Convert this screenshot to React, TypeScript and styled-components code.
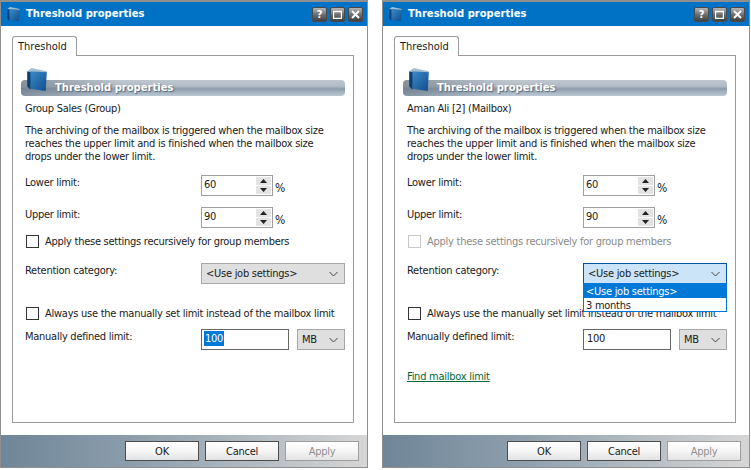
import styled, { createGlobalStyle } from 'styled-components';

const GlobalStyle = createGlobalStyle`
  html, body {
    margin: 0;
    padding: 0;
    background: #ffffff;
  }
  body {
    font-family: "DejaVu Sans Condensed", "DejaVu Sans", sans-serif;
    font-size: 11px;
    letter-spacing: -0.26px;
    color: #1a1a1a;
  }
`;

const Page = styled.div`
  width: 751px;
  height: 470px;
  display: flex;
  gap: 14px;
  overflow: hidden;
`;

const Dialog = styled.div`
  width: 368px;
  height: 468px;
  box-sizing: border-box;
  border: 1px solid #8f8f8f;
  border-top-width: 2px;
  display: flex;
  flex-direction: column;
  background: #fff;
`;

const TitleBar = styled.div`
  height: 24px;
  flex: none;
  background: #0072c6;
  display: flex;
  align-items: center;
  padding: 0 4px 0 5px;
`;

const TitleText = styled.span`
  margin: -2px 0 0 5px;
  flex: 1;
  color: #fff;
  font-family: "DejaVu Sans", sans-serif;
  font-weight: 700;
  font-size: 10px;
  letter-spacing: 0;
`;

const WinButton = styled.div`
  width: 15px;
  height: 15px;
  margin-left: 3px;
  border-radius: 2px;
  border: 1px solid #4a4a4a;
  box-sizing: border-box;
  background: linear-gradient(#b4b4b4, #6a6a6a 55%, #3f3f3f);
  color: #fff;
  font-size: 11px;
  font-weight: 700;
  display: flex;
  align-items: center;
  justify-content: center;
`;

const Body = styled.div`
  flex: 1;
  padding: 10px 13px 12px 11px;
  display: flex;
  flex-direction: column;
`;

const Tab = styled.div`
  align-self: flex-start;
  width: 65px;
  height: 20px;
  box-sizing: border-box;
  border: 1px solid #9a9a9a;
  border-bottom: none;
  border-radius: 3px 3px 0 0;
  background: #fff;
  padding: 3px 0 0 5px;
  margin-bottom: -1px;
  letter-spacing: 0;
  position: relative;
  z-index: 1;
`;

const Pane = styled.div`
  flex: 1;
  border: 1px solid #9a9a9a;
  padding: 24px 8px 0 8px;
  display: flex;
  flex-direction: column;
`;

const Banner = styled.div`
  position: relative;
  height: 16px;
  border-radius: 4px;
  background:
    linear-gradient(90deg, rgba(100, 114, 128, 0.6), rgba(110, 124, 138, 0) 30%),
    linear-gradient(#bfc7cf 0%, #b0bac4 40%, #8d9cac 55%, #9dacbb 70%, #bcc8d4 100%);
  padding-left: 34px;
  color: #fff;
  font-family: "DejaVu Sans", sans-serif;
  font-weight: 700;
  font-size: 10px;
  letter-spacing: 0;
  line-height: 15px;
  text-shadow: 1px 1px 1px #5c6a78;
`;

const BannerIcon = styled.div`
  position: absolute;
  left: 4px;
  top: -12px;
`;

const Content = styled.div`
  padding: 0 0 0 4px;
  display: flex;
  flex-direction: column;
`;

const OwnerName = styled.div`
  margin-top: 5px;
  line-height: 15px;
`;

const Description = styled.div`
  margin-top: 8px;
  line-height: 13px;
  white-space: nowrap;
`;

const FieldRow = styled.div<{ $top: number }>`
  display: flex;
  align-items: flex-start;
  margin-top: ${(p) => p.$top}px;
  position: relative;
`;

const Label = styled.div`
  width: 176px;
  flex: none;
  line-height: 15px;
`;

const SpinBox = styled.div`
  width: 72px;
  height: 21px;
  box-sizing: border-box;
  border: 1px solid #a0a0a0;
  background: #fff;
  display: flex;
  align-items: center;
  padding: 0 1px 0 2px;
`;

const SpinValue = styled.span`
  flex: 1;
  margin-top: -2px;
`;

const SpinButtons = styled.div`
  width: 15px;
  display: flex;
  flex-direction: column;
  gap: 1px;
`;

const SpinArrow = styled.div`
  height: 8px;
  background: #e3e3e3;
  display: flex;
  align-items: center;
  justify-content: center;
`;

const Unit = styled.span`
  margin: 6px 0 0 2px;
  line-height: 15px;
  font-size: 12px;
`;

const CheckRow = styled.div<{ $top: number; $disabled?: boolean }>`
  display: flex;
  align-items: center;
  height: 15px;
  white-space: nowrap;
  margin-top: ${(p) => p.$top}px;
  color: ${(p) => (p.$disabled ? '#8a8a8a' : 'inherit')};
`;

const CheckBox = styled.div<{ $disabled?: boolean }>`
  width: 13px;
  height: 13px;
  box-sizing: border-box;
  border: 1px solid ${(p) => (p.$disabled ? '#c8c8c8' : '#333333')};
  background: #fff;
  margin: 0 6px 0 1px;
  flex: none;
`;

const Combo = styled.div<{ $width: number; $open?: boolean }>`
  width: ${(p) => p.$width}px;
  height: 21px;
  box-sizing: border-box;
  border: 1px solid ${(p) => (p.$open ? '#005499' : '#a8a8a8')};
  background: ${(p) => (p.$open ? '#cce4f7' : '#dfdfdf')};
  display: flex;
  align-items: center;
  justify-content: space-between;
  padding: 0 6px 0 4px;
  flex: none;
`;

const DropList = styled.div`
  position: absolute;
  left: 176px;
  top: 20px;
  width: 144px;
  box-sizing: border-box;
  border: 1px solid #0078d7;
  background: #fff;
  z-index: 2;
`;

const DropItem = styled.div<{ $active?: boolean }>`
  height: ${(p) => (p.$active ? 14 : 13)}px;
  line-height: 15px;
  padding-left: 2px;
  background: ${(p) => (p.$active ? '#0078d7' : 'transparent')};
  color: ${(p) => (p.$active ? '#fff' : 'inherit')};
`;

const LimitInput = styled.div`
  width: 88px;
  height: 21px;
  box-sizing: border-box;
  border: 1px solid #666;
  background: #fff;
  display: flex;
  align-items: center;
  padding: 0 0 2px 2px;
  margin-right: 8px;
  flex: none;
`;

const Selected = styled.span<{ $on: boolean }>`
  background: ${(p) => (p.$on ? '#0078d7' : 'transparent')};
  color: ${(p) => (p.$on ? '#fff' : 'inherit')};
  padding: 0 1px;
  line-height: 15px;
`;

const FindLink = styled.a`
  align-self: flex-start;
  margin-top: 19px;
  color: #006837;
  text-decoration: underline;
  line-height: 15px;
`;

const Footer = styled.div`
  height: 32px;
  flex: none;
  background: linear-gradient(90deg, #6f8698 0%, #8b9dab 35%, #d6d6d6 100%);
  display: flex;
  justify-content: flex-end;
  align-items: center;
  gap: 6px;
  padding: 0 8px 0 0;
  box-sizing: border-box;
`;

const FooterButton = styled.div<{ $disabled?: boolean }>`
  width: 74px;
  height: 20px;
  box-sizing: border-box;
  border: 1px solid ${(p) => (p.$disabled ? '#9f9f9f' : '#4d4d4d')};
  background: linear-gradient(#ffffff 0%, #f6f6f6 50%, #e2e2e2 100%);
  color: ${(p) => (p.$disabled ? '#8f8f8f' : '#1a1a1a')};
  display: flex;
  align-items: center;
  justify-content: center;
`;

function Cube({ size, id }: { size: number; id: string }) {
  return (
    <svg width={size} height={size} viewBox="0 0 20 22">
      <defs>
        <linearGradient id={id} x1="0" y1="0" x2="1" y2="1">
          <stop offset="0" stopColor="#3f8ccb" />
          <stop offset="1" stopColor="#0f4d8c" />
        </linearGradient>
      </defs>
      <path d="M1 3 L5 0 L19 3 L19 5 Z" fill="#a6bed2" />
      <path d="M3 3 L19 4 L18 21 L4 19 Z" fill={`url(#${id})`} />
      <path d="M1 3 L4 4 L4 20 L1 17 Z" fill="#0d3f70" />
    </svg>
  );
}

function Chevron() {
  return (
    <svg width="9" height="6" viewBox="0 0 9 6">
      <path d="M0.5 1 L4.5 5 L8.5 1" fill="none" stroke="#444" strokeWidth="1" />
    </svg>
  );
}

function Spin({ value }: { value: string }) {
  return (
    <SpinBox>
      <SpinValue>{value}</SpinValue>
      <SpinButtons>
        <SpinArrow>
          <svg width="7" height="4" viewBox="0 0 7 4">
            <path d="M3.5 0 L7 4 L0 4 Z" fill="#222" />
          </svg>
        </SpinArrow>
        <SpinArrow>
          <svg width="7" height="4" viewBox="0 0 7 4">
            <path d="M0 0 L7 0 L3.5 4 Z" fill="#222" />
          </svg>
        </SpinArrow>
      </SpinButtons>
    </SpinBox>
  );
}

interface ThresholdDialogProps {
  owner: string;
  idPrefix: string;
  recursiveDisabled?: boolean;
  comboOpen?: boolean;
  limitSelected?: boolean;
  showFindLink?: boolean;
}

function ThresholdDialog({ owner, idPrefix, recursiveDisabled, comboOpen, limitSelected, showFindLink }: ThresholdDialogProps) {
  return (
    <Dialog>
      <TitleBar>
        <Cube size={15} id={`${idPrefix}-title`} />
        <TitleText>Threshold properties</TitleText>
        <WinButton>?</WinButton>
        <WinButton>
          <svg width="9" height="9" viewBox="0 0 9 9">
            <path d="M0.5 1.5 H8.5 V8.5 H0.5 Z" fill="none" stroke="#fff" strokeWidth="1.4" />
          </svg>
        </WinButton>
        <WinButton>
          <svg width="9" height="9" viewBox="0 0 9 9">
            <path d="M1 1 L8 8 M8 1 L1 8" stroke="#fff" strokeWidth="2" />
          </svg>
        </WinButton>
      </TitleBar>
      <Body>
        <Tab>Threshold</Tab>
        <Pane>
          <Banner>
            <BannerIcon>
              <Cube size={24} id={`${idPrefix}-banner`} />
            </BannerIcon>
            Threshold properties
          </Banner>
          <Content>
            <OwnerName>{owner}</OwnerName>
            <Description>
              The archiving of the mailbox is triggered when the mailbox size
              <br />
              reaches the upper limit and is finished when the mailbox size
              <br />
              drops under the lower limit.
            </Description>
            <FieldRow $top={12}>
              <Label>Lower limit:</Label>
              <Spin value="60" />
              <Unit>%</Unit>
            </FieldRow>
            <FieldRow $top={11}>
              <Label>Upper limit:</Label>
              <Spin value="90" />
              <Unit>%</Unit>
            </FieldRow>
            <CheckRow $top={6} $disabled={recursiveDisabled}>
              <CheckBox $disabled={recursiveDisabled} />
              Apply these settings recursively for group members
            </CheckRow>
            <FieldRow $top={14}>
              <Label>Retention category:</Label>
              <Combo $width={144} $open={comboOpen}>
                &lt;Use job settings&gt;
                <Chevron />
              </Combo>
              {comboOpen && (
                <DropList>
                  <DropItem $active>&lt;Use job settings&gt;</DropItem>
                  <DropItem>3 months</DropItem>
                </DropList>
              )}
            </FieldRow>
            <CheckRow $top={22}>
              <CheckBox />
              Always use the manually set limit instead of the mailbox limit
            </CheckRow>
            <FieldRow $top={8}>
              <Label>Manually defined limit:</Label>
              <LimitInput>
                <Selected $on={!!limitSelected}>100</Selected>
              </LimitInput>
              <Combo $width={48}>
                MB
                <Chevron />
              </Combo>
            </FieldRow>
            {showFindLink && <FindLink>Find mailbox limit</FindLink>}
          </Content>
        </Pane>
      </Body>
      <Footer>
        <FooterButton>OK</FooterButton>
        <FooterButton>Cancel</FooterButton>
        <FooterButton $disabled>Apply</FooterButton>
      </Footer>
    </Dialog>
  );
}

export default function App() {
  return (
    <Page>
      <GlobalStyle />
      <ThresholdDialog owner="Group Sales (Group)" idPrefix="group" limitSelected />
      <ThresholdDialog owner="Aman Ali [2] (Mailbox)" idPrefix="mailbox" recursiveDisabled comboOpen showFindLink />
    </Page>
  );
}
